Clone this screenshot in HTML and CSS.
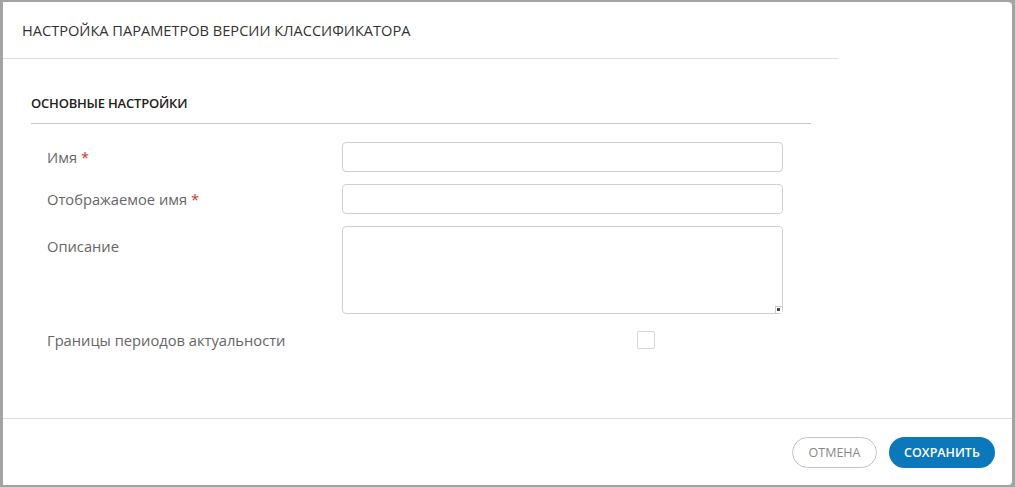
FILE: index.html
```html
<!DOCTYPE html>
<html lang="ru">
<head>
    <meta charset="UTF-8">
    <meta name="viewport" content="width=device-width, initial-scale=1.0">
    <title>Настройка параметров версии классификатора</title>
    <link rel="stylesheet" href="styles.css">
</head>
<body>
    <div class="dialog">
        <header class="dialog-header">
            <h1 class="dialog-title">НАСТРОЙКА ПАРАМЕТРОВ ВЕРСИИ КЛАССИФИКАТОРА</h1>
        </header>

        <div class="dialog-body">
            <section class="settings-section">
                <h2 class="section-title">ОСНОВНЫЕ НАСТРОЙКИ</h2>
                <div class="form">
                    <div class="form-row">
                        <label class="form-label">Имя <span class="required">*</span></label>
                        <div class="form-field">
                            <input type="text" class="text-input">
                        </div>
                    </div>
                    <div class="form-row">
                        <label class="form-label">Отображаемое имя <span class="required">*</span></label>
                        <div class="form-field">
                            <input type="text" class="text-input">
                        </div>
                    </div>
                    <div class="form-row">
                        <label class="form-label area-label">Описание</label>
                        <div class="form-field area-field">
                            <textarea class="text-area"></textarea>
                            <span class="resize-grip"></span>
                        </div>
                    </div>
                    <div class="form-row check-row">
                        <label class="form-label">Границы периодов актуальности</label>
                        <div class="form-field">
                            <span class="checkbox"></span>
                        </div>
                    </div>
                </div>
            </section>
        </div>

        <footer class="dialog-footer">
            <button class="btn btn-cancel">ОТМЕНА</button>
            <button class="btn btn-save">СОХРАНИТЬ</button>
        </footer>
    </div>
</body>
</html>
```

FILE: styles.css
```css
* {
    margin: 0;
    padding: 0;
    box-sizing: border-box;
}

:root {
    --text-color: #333;
    --label-color: #666;
    --border-color: #d0d0d0;
    --divider-color: #dedede;
    --primary-color: #0a78ba;
}

html, body {
    height: 100%;
}

body {
    font-family: "Open Sans", "Liberation Sans", sans-serif;
    color: var(--text-color);
    background: #a3a3a3;
    padding: 2px 3px 2px 3px;
}

.dialog {
    height: 100%;
    background: #fff;
    border-radius: 0 4px 4px 0;
    display: flex;
    flex-direction: column;
}

/* Шапка */
.dialog-header {
    height: 57px;
    width: 835px;
    border-bottom: 1px solid var(--divider-color);
    display: flex;
    align-items: center;
    padding-left: 19px;
}

.dialog-title {
    font-size: 14.6px;
    font-weight: normal;
    color: #333;
}

/* Тело */
.dialog-body {
    flex: 1;
    padding: 34px 0 0 28px;
}

.settings-section {
    width: 780px;
}

.section-title {
    font-size: 13px;
    font-weight: 600;
    color: #222;
    line-height: 20px;
    padding-bottom: 10px;
    border-bottom: 1px solid #c8c8c8;
    letter-spacing: -0.2px;
}

.form {
    padding: 18px 28px 0 16px;
    display: flex;
    flex-direction: column;
    gap: 12px;
}

.form-row {
    display: flex;
    align-items: flex-start;
}

.check-row {
    margin-top: 4px;
    align-items: center;
}

.form-label {
    width: 295px;
    flex-shrink: 0;
    font-size: 14.7px;
    line-height: 30px;
    color: var(--label-color);
}

.area-label {
    padding-top: 5px;
}

.check-row .form-label {
    line-height: 20px;
}

.required {
    color: #c0392b;
}

.form-field {
    flex: 1;
}

.area-field {
    position: relative;
}

.text-input,
.text-area {
    display: block;
    width: 100%;
    border: 1px solid var(--border-color);
    border-radius: 4px;
    background: #fff;
    font-family: inherit;
    font-size: 14px;
    outline: none;
}

.text-input {
    height: 30px;
}

.text-area {
    height: 88px;
    resize: none;
}

.resize-grip {
    position: absolute;
    right: 1px;
    bottom: 1px;
    width: 7px;
    height: 7px;
    border-top: 1px solid #ccc;
    border-left: 1px solid #ccc;
    background: #fff;
}

.resize-grip::after {
    content: '';
    position: absolute;
    left: 1px;
    top: 1px;
    width: 3px;
    height: 3px;
    background: #444;
}

.checkbox {
    display: block;
    width: 18px;
    height: 18px;
    margin-left: 295px;
    border: 1px solid #d8d8d8;
    border-radius: 2px;
}

/* Подвал */
.dialog-footer {
    border-top: 1px solid var(--divider-color);
    padding: 18px 17px 17px 0;
    display: flex;
    justify-content: flex-end;
    gap: 12px;
}

.btn {
    height: 31px;
    border-radius: 16px;
    font-family: inherit;
    font-size: 12.5px;
    cursor: pointer;
}

.btn-cancel {
    width: 85px;
    background: #fff;
    border: 1px solid #c4c4c4;
    color: #888;
}

.btn-save {
    width: 106px;
    background: var(--primary-color);
    border: none;
    color: #fff;
    font-weight: 600;
}
```
